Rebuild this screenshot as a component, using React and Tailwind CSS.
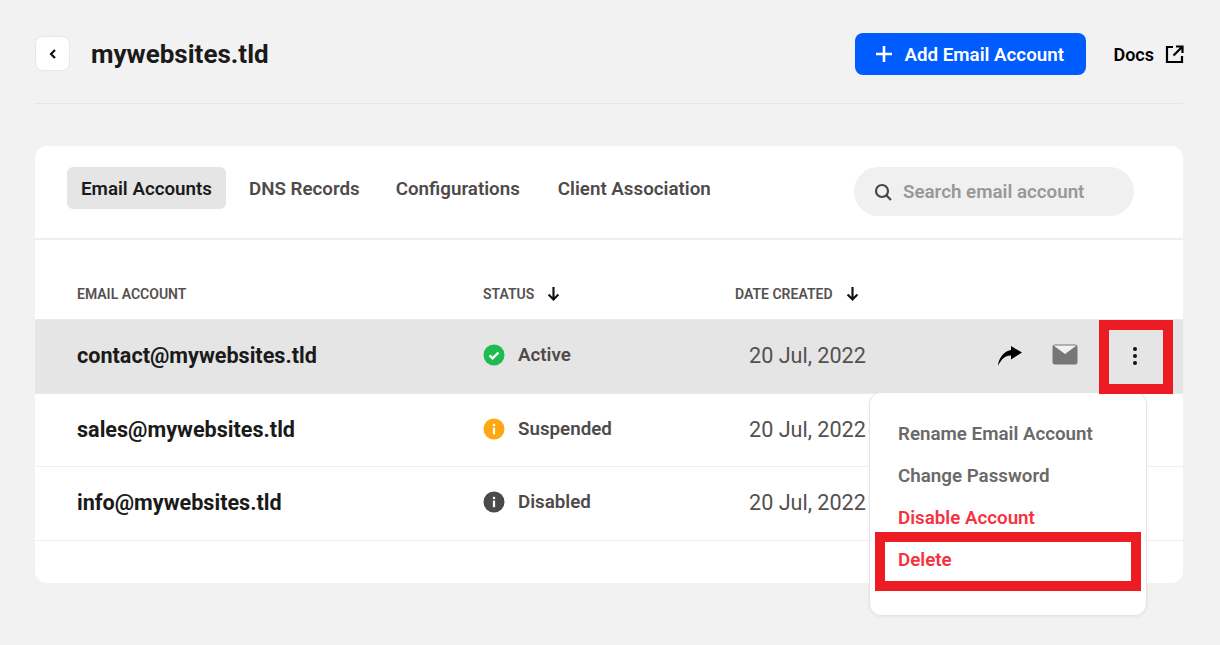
import React from 'react';

const Arrow = () => (
  <svg width="13" height="15" viewBox="0 0 12 14" fill="none" stroke="#111" strokeWidth="2" className="block mb-[2px]">
    <path d="M6 1v11.500M1.400 8 6 12.600 10.600 8" />
  </svg>
);

const Status = ({ kind, label }) => (
  <div className="flex items-center gap-[13px] mb-[2px]">
    {kind === 'ok' && (
      <svg width="22" height="22" viewBox="0 0 22 22" className="block">
        <circle cx="11" cy="11" r="10.500" fill="#1dbb50" />
        <path d="M6.600 11.300l3 3 5.800-5.800" fill="none" stroke="#fff" strokeWidth="2.400" />
      </svg>
    )}
    {kind !== 'ok' && (
      <svg width="22" height="22" viewBox="0 0 22 22" className="block">
        <circle cx="11" cy="11" r="10.500" fill={kind === 'warn' ? '#fea811' : '#4a4a4a'} />
        <rect x="9.900" y="9.600" width="2.200" height="6.600" fill="#fff" />
        <rect x="9.900" y="5.800" width="2.200" height="2.300" fill="#fff" />
      </svg>
    )}
    <span className="text-[18.750px] font-semibold text-[#4f4a4a] leading-[22px]">{label}</span>
  </div>
);

const Row = ({ email, kind, label, active }) => (
  <div className={`flex items-center h-[73.500px] pl-[42px] border-b ${active ? 'bg-[#e5e5e5] border-[#e9e9e9]' : 'bg-white border-[#efefef]'}`}>
    <div className="w-[406px] text-[21.600px] font-bold text-[#1a1a1a]">{email}</div>
    <div className="w-[266px]"><Status kind={kind} label={label} /></div>
    <div className="text-[21.600px] text-[#555050]">20 Jul, 2022</div>
    {active && (
      <div className="flex items-center ml-auto">
        <svg width="26" height="22" viewBox="0 0 26 22" className="block mr-[29px]">
          <path d="M1 21C1.500 13 7 6 14 5V1l11 6.500-11 7v-4C9 10 4.500 13.500 1 21z" fill="#000" />
        </svg>
        <svg width="26" height="21" viewBox="0 0 26 21" className="block mr-[55px] mb-[3px]">
          <rect x="0.500" y="0.500" width="25" height="20" rx="2.500" fill="#777" />
          <path d="M1.500 1.500 13 10 24.500 1.500z" fill="#f2f2f2" />
        </svg>
        <div className="flex flex-col gap-[3px] mr-[46px]">
          <span className="w-[4px] h-[4px] rounded-full bg-[#111]" />
          <span className="w-[4px] h-[4px] rounded-full bg-[#111]" />
          <span className="w-[4px] h-[4px] rounded-full bg-[#111]" />
        </div>
      </div>
    )}
  </div>
);

export default function App() {
  return (
    <div className="relative w-[1220px] h-[645px] overflow-hidden bg-[#f2f2f2] pl-[35px] pr-[37px] font-['Roboto',sans-serif]">
      <header className="flex items-center h-[104px] border-b border-[#e6e6e6] pt-[4px]">
        <button className="w-[35px] h-[35px] rounded-[8px] bg-white border border-[#e8e8e8] flex items-center justify-center">
          <svg width="8" height="10" viewBox="0 0 8 10" fill="none" stroke="#111" strokeWidth="2.200"><path d="M6 1 2 5l4 4" /></svg>
        </button>
        <h1 className="ml-[21px] text-[26px] font-bold text-[#1a1a1a] leading-[30px]">mywebsites.tld</h1>
        <button className="ml-auto w-[231px] h-[42px] pt-[2px] rounded-[8px] bg-[#005cff] text-white flex items-center pl-[20px] text-[18.750px] font-semibold mt-[1px]">
          <svg width="18" height="18" viewBox="0 0 18 18" stroke="#fff" strokeWidth="2.600" className="block mr-[11px] mb-[2px]"><path d="M9 1v16M1 9h16" /></svg>
          Add Email Account
        </button>
        <span className="ml-[27px] text-[18px] font-semibold text-black mt-[2px]">Docs</span>
        <svg width="19" height="19" viewBox="0 0 19 19" fill="none" stroke="#000" strokeWidth="2.200" className="block shrink-0 ml-[11px] mr-[-1px] mt-[1px]">
          <path d="M8 2H2v15h15v-6M11 1.500h6.500V8M17 2 8.500 10.500" />
        </svg>
      </header>

      <section className="mt-[42px] bg-white rounded-[12px] h-[437px] overflow-hidden">
        <div className="flex items-start h-[94px] border-b-2 border-[#efefef] pl-[32px] pt-[21px]">
          <div className="h-[42px] w-[159px] pt-[3px] rounded-[6px] bg-[#e5e5e5] flex items-center justify-center text-[18.750px] font-semibold text-[#1a1a1a]">Email Accounts</div>
          <div className="h-[42px] pt-[2px] flex items-center ml-[23px] text-[18.750px] font-semibold text-[#4f4a4a]">DNS Records</div>
          <div className="h-[42px] pt-[2px] flex items-center ml-[36px] text-[18.750px] font-semibold text-[#4f4a4a]">Configurations</div>
          <div className="h-[42px] pt-[2px] flex items-center ml-[38px] text-[18.750px] font-semibold text-[#4f4a4a]">Client Association</div>
          <div className="ml-auto mr-[49px] w-[280px] h-[49px] pt-[1px] rounded-full bg-[#f0f0f0] flex items-center pl-[20px]">
            <svg width="18" height="18" viewBox="0 0 18 18" fill="none" stroke="#4a4545" strokeWidth="2.200" className="block mr-[11px]">
              <circle cx="8" cy="8" r="6" /><path d="M12.500 12.500 17 17" />
            </svg>
            <span className="text-[18.750px] font-semibold text-[#9b9797]">Search email account</span>
          </div>
        </div>

        <div className="flex items-center h-[80px] pl-[42px] pt-[30px] text-[14px] font-semibold text-[#555050] border-b border-[#e9e9e9]">
          <div className="w-[406px]">EMAIL ACCOUNT</div>
          <div className="w-[252px] flex items-center gap-[13px]">STATUS <Arrow /></div>
          <div className="flex items-center gap-[13px]">DATE CREATED <Arrow /></div>
        </div>

        <Row email="contact@mywebsites.tld" kind="ok" label="Active" active />
        <Row email="sales@mywebsites.tld" kind="warn" label="Suspended" />
        <Row email="info@mywebsites.tld" kind="off" label="Disabled" />
      </section>

      <div className="absolute left-[869px] top-[392px] w-[278px] h-[224px] bg-white rounded-[12px] border border-[#e4e4e4] shadow-[0_1px_3px_rgba(0,0,0,0.06)] pl-[28px] pt-[20px] text-[18.750px] font-semibold">
        <div className="h-[42px] flex items-center text-[#6c6868]">Rename Email Account</div>
        <div className="h-[42px] flex items-center text-[#6c6868]">Change Password</div>
        <div className="h-[42px] flex items-center text-[#f5333f]">Disable Account</div>
        <div className="h-[42px] flex items-center text-[#f5333f]">Delete</div>
      </div>

      <div className="absolute left-[1099px] top-[320px] w-[74px] h-[74px] border-[10px] border-[#ed1c24]" />
      <div className="absolute left-[875px] top-[532px] w-[266px] h-[59px] border-[10px] border-[#ed1c24]" />
    </div>
  );
}
